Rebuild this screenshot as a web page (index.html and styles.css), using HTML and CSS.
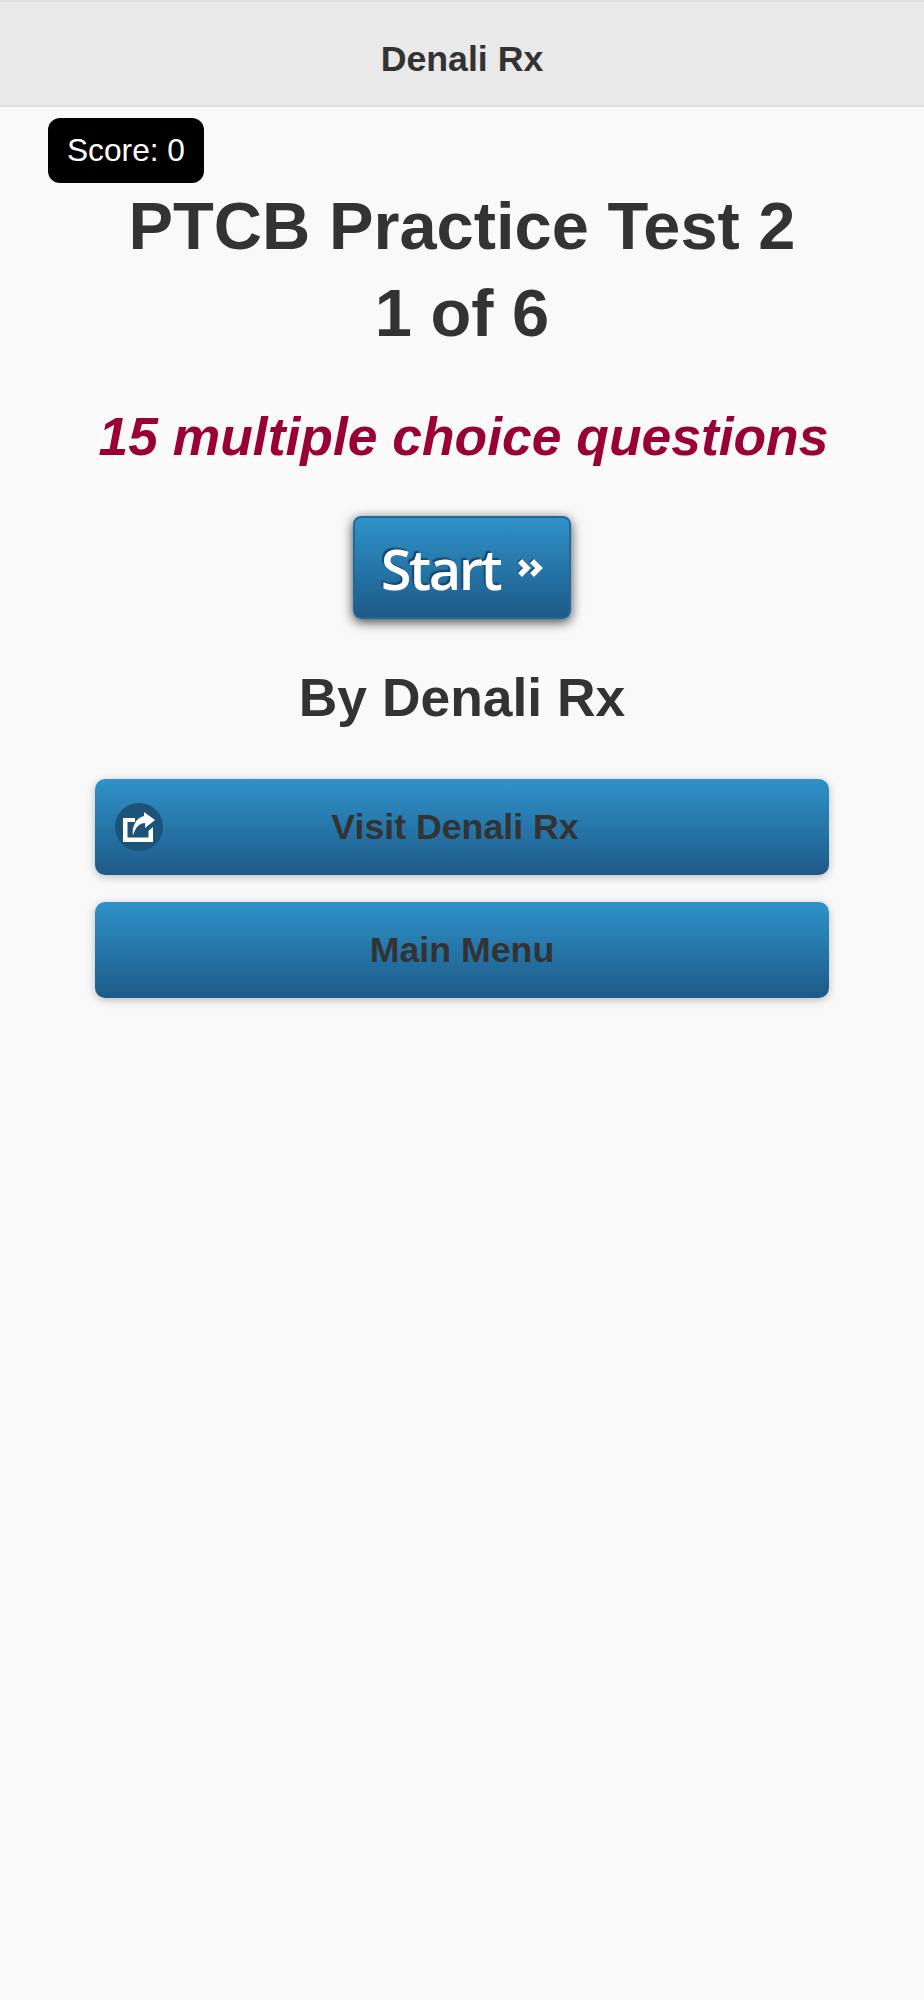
FILE: index.html
```html
<!DOCTYPE html>
<html lang="en">
<head>
    <meta charset="UTF-8">
    <meta name="viewport" content="width=device-width, initial-scale=1.0">
    <title>Denali Rx</title>
    <link rel="stylesheet" href="styles.css">
</head>
<body>
    <div class="header">
        <h1 class="header-title">Denali Rx</h1>
    </div>

    <div class="content">
        <div class="score">Score: 0</div>

        <h2 class="quiz-title">PTCB Practice Test 2<br>1 of 6</h2>
        <p class="quiz-note">15 multiple choice questions</p>

        <a class="start-btn" href="#">
            <span class="start-label">Start</span>
            <svg class="start-arrows" viewBox="0 0 25 18" width="25" height="18">
                <path d="M2 2 L9 9 L2 16"/>
                <path d="M14 2 L21 9 L14 16"/>
            </svg>
        </a>

        <h3 class="quiz-author">By Denali Rx</h3>

        <a class="list-btn list-btn-icon" href="#">
            <span class="btn-icon">
                <svg viewBox="0 0 48 48" width="48" height="48">
                    <path d="M8 15 H20 V19 H12.5 V34.5 H33.5 V28 L38 24 V39 H8 Z" fill="#fff"/>
                    <path d="M29 9 L40 17 L30 25 V20 C24 20 20 25 18 32.5 C16.5 24 21 14.5 29 13 Z" fill="#fff"/>
                </svg>
            </span>
            Visit Denali Rx
        </a>
        <a class="list-btn" href="#">Main Menu</a>
    </div>
</body>
</html>
```

FILE: styles.css
```css
body {
    font-family: 'Liberation Sans', Arial, sans-serif;
    margin: 0;
    background: #f9f9f9;
    color: #333;
    min-height: 100vh;
}

.header {
    background: #e9e9e9;
    border-top: 2px solid #ddd;
    border-bottom: 2px solid #ddd;
    box-sizing: border-box;
    height: 107px;
    padding-top: 12px;
    display: flex;
    align-items: center;
    justify-content: center;
}

.header-title {
    margin: 0;
    font-size: 35.7px;
    font-weight: bold;
    color: #333;
}

.content {
    padding: 11px 95px 0;
    text-align: center;
}

.score {
    background: #000;
    color: #fff;
    width: 156px;
    height: 65px;
    line-height: 65px;
    margin-left: -47px;
    font-size: 31.7px;
    border-radius: 12px;
}

.quiz-title {
    margin: 0 -60px;
    font-size: 66.8px;
    line-height: 87px;
    font-weight: bold;
}

.quiz-note {
    margin: 49px -60px 0 -57px;
    font-size: 53.4px;
    line-height: 62px;
    font-weight: bold;
    font-style: italic;
    color: #990033;
}

.start-btn {
    display: flex;
    align-items: center;
    justify-content: center;
    gap: 18px;
    box-sizing: border-box;
    width: 218px;
    height: 103px;
    margin: 48px auto 0;
    background: linear-gradient(#2f92c9, #1d5a88);
    border: 2px solid #1f6a9b;
    border-radius: 8px;
    box-shadow: 0 3px 12px rgba(0, 0, 0, 0.75);
    text-decoration: none;
}

.start-label {
    font-family: 'Open Sans', sans-serif;
    font-size: 56px;
    font-weight: 600;
    letter-spacing: -2.4px;
    color: #fff;
    text-shadow: -2px -2px 1px #17496e;
}

.start-arrows {
    fill: none;
    stroke: #fff;
    stroke-width: 5.5px;
    filter: drop-shadow(-1px -1px 0 #17496e);
}

.quiz-author {
    margin: 48px 0 0;
    font-size: 53.4px;
    line-height: 62px;
    font-weight: bold;
}

.list-btn {
    display: block;
    position: relative;
    height: 96px;
    line-height: 96px;
    margin-top: 27px;
    background: linear-gradient(#2f92c9, #1d5a88);
    border-radius: 10px;
    box-shadow: 0 2px 8px rgba(0, 0, 0, 0.25);
    font-size: 35.7px;
    font-weight: bold;
    color: #333;
    text-decoration: none;
}

.quiz-author + .list-btn {
    margin-top: 50px;
}

.list-btn-icon {
    padding-right: 14px;
    box-sizing: border-box;
}

.btn-icon {
    position: absolute;
    left: 20px;
    top: 24px;
    width: 48px;
    height: 48px;
    border-radius: 50%;
    background: #1c5378;
}

.btn-icon svg {
    display: block;
}
```
